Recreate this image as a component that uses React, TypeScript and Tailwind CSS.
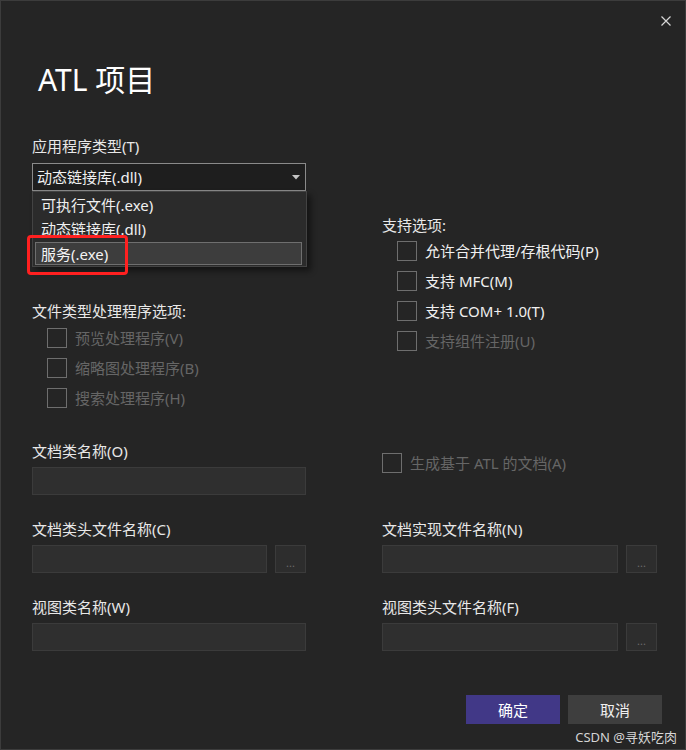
import React from "react";

const font = "font-['Noto_Sans','Noto_Sans_CJK_SC',sans-serif]";

function Check({ label, disabled }: { label: string; disabled?: boolean }) {
  return (
    <div className="flex h-[30px] items-center">
      <span className="h-5 w-5 shrink-0 border border-[#6e6e6e]" />
      <span className={disabled ? "ml-2 text-[15px] leading-5 text-[#666666]" : "ml-2 text-[15px] leading-5 text-[#f0f0f0]"}>
        {label}
      </span>
    </div>
  );
}

function Field({ label, browse }: { label: string; browse?: boolean }) {
  return (
    <div className="flex flex-col">
      <div className="h-5 text-[15px] leading-5 text-[#e8e8e8]">{label}</div>
      <div className="mt-[6px] flex h-[28px] gap-2">
        <div className="flex-1 border border-[#3b3b3b] bg-[#2f2f2f]" />
        {browse && (
          <div className="flex w-[31px] items-end justify-center border border-[#3b3b3b] bg-[#2d2d2d] pb-[3px] text-[11px] leading-3 text-[#6b6b6b]">
            ...
          </div>
        )}
      </div>
    </div>
  );
}

export default function App() {
  return (
    <div className={`relative flex h-[750px] w-[686px] flex-col border border-[#3c3c3c] bg-[#252525] ${font}`}>
      {/* title bar */}
      <div className="flex h-[41px] justify-end pr-[13px] pt-[14px]">
        <svg width="12" height="12" viewBox="0 0 12 12" className="text-[#d6d6d6]">
          <path d="M1.5 1.5L10.5 10.5M10.5 1.5L1.5 10.5" stroke="currentColor" strokeWidth="1.2" />
        </svg>
      </div>

      <div className="pl-[37px] pt-[18px] text-[30px] leading-10 text-white">ATL 项目</div>

      {/* top section */}
      <div className="mt-[36px] flex gap-[76px] pl-[31px]">
        <div className="w-[274px]">
          <div className="h-5 text-[15px] leading-5 text-[#e8e8e8]">应用程序类型(T)</div>
          <div className="relative mt-[7px]">
            <div className="flex h-[28px] items-center justify-between border border-[#8a8a8a] bg-[#1e1e1e] pl-1 pr-[5px]">
              <span className="text-[15px] leading-5 text-[#f0f0f0]">动态链接库(.dll)</span>
              <svg width="8" height="5" viewBox="0 0 8 5">
                <path d="M0 0H8L4 4.5Z" fill="#c4c4c4" />
              </svg>
            </div>

            {/* open list */}
            <div className="absolute left-0 top-[28px] z-10 h-[76px] w-[275px] border border-[#434343] bg-[#2b2b2b] p-px shadow-[4px_4px_6px_rgba(0,0,0,0.45)]">
              <div className="flex h-6 items-center pl-[7px] text-[15px] leading-5 text-[#f0f0f0]">可执行文件(.exe)</div>
              <div className="flex h-6 items-center pl-[7px] text-[15px] leading-5 text-[#f0f0f0]">动态链接库(.dll)</div>
              <div className="ml-px mr-[3px] mt-px flex h-[23px] items-center border border-[#6f6f6f] bg-[#3d3d3d] pl-[5px] text-[15px] leading-5 text-[#f4f4f4]">
                服务(.exe)
              </div>
            </div>
            <div className="absolute left-[-5px] top-[72px] z-20 h-[40px] w-[101px] rounded-[4px] border-[3px] border-[#ff2020]" />
          </div>

          <div className="mt-[110px] h-5 text-[15px] leading-5 text-[#e8e8e8]">文件类型处理程序选项:</div>
          <div className="mt-[2px] pl-[15px]">
            <Check label="预览处理程序(V)" disabled />
            <Check label="缩略图处理程序(B)" disabled />
            <Check label="搜索处理程序(H)" disabled />
          </div>
        </div>

        <div className="w-[275px] pt-[79px]">
          <div className="h-5 text-[15px] leading-5 text-[#e8e8e8]">支持选项:</div>
          <div className="mt-px pl-[15px]">
            <Check label="允许合并代理/存根代码(P)" />
            <Check label="支持 MFC(M)" />
            <Check label="支持 COM+ 1.0(T)" />
            <Check label="支持组件注册(U)" disabled />
          </div>
        </div>
      </div>

      {/* name fields */}
      <div className="mt-[28px] grid grid-cols-[274px_275px] gap-x-[76px] gap-y-6 pl-[31px]">
        <Field label="文档类名称(O)" />
        <div className="mt-[12px] flex h-5 items-center">
          <span className="h-5 w-5 shrink-0 border border-[#6e6e6e]" />
          <span className="ml-2 text-[15px] leading-5 text-[#666666]">生成基于 ATL 的文档(A)</span>
        </div>
        <Field label="文档类头文件名称(C)" browse />
        <Field label="文档实现文件名称(N)" browse />
        <Field label="视图类名称(W)" />
        <Field label="视图类头文件名称(F)" browse />
      </div>

      {/* buttons */}
      <div className="mt-[44px] flex justify-end gap-2 pr-[23px]">
        <button className="h-[29px] w-[94px] bg-[#413887] text-[15px] leading-5 text-white">确定</button>
        <button className="h-[29px] w-[94px] bg-[#3e3e3e] text-[15px] leading-5 text-[#f0f0f0]">取消</button>
      </div>

      <div className="absolute bottom-[4px] right-[8px] text-[13px] leading-4 text-[#d4d4d4]">CSDN @寻妖吃肉</div>
    </div>
  );
}
